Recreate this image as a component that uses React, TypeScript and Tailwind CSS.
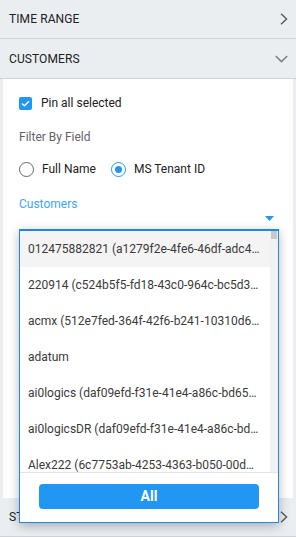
import React from 'react';

const customers = [
  '012475882821 (a1279f2e-4fe6-46df-adc4-5b2e8c1d9f07)',
  '220914 (c524b5f5-fd18-43c0-964c-bc5d3a7e1f42)',
  'acmx (512e7fed-364f-42f6-b241-10310d6c8a9e)',
  'adatum',
  'ai0logics (daf09efd-f31e-41e4-a86c-bd65e2f0c113)',
  'ai0logicsDR (daf09efd-f31e-41e4-a86c-bd65e2f0c113)',
  'Alex222 (6c7753ab-4253-4363-b050-00d3f8a2e6b1)',
];

function ChevronRight() {
  return (
    <svg width="8" height="12" viewBox="0 0 8 12" fill="none">
      <path d="M1 0.8 L6.6 6 L1 11.2" stroke="#555a60" strokeWidth="1.4" />
    </svg>
  );
}

function ChevronDown() {
  return (
    <svg width="13" height="8" viewBox="0 0 13 8" fill="none">
      <path d="M0.8 1 L6.5 6.6 L12.2 1" stroke="#7a7f85" strokeWidth="1.5" />
    </svg>
  );
}

function SectionHeader({ title, open, h }: { title: string; open?: boolean; h: string }) {
  return (
    <div className={`${h} flex items-center justify-between pl-[9px] pr-[8px] border-b border-[#cfd3d7]`}>
      <span className="text-[12px] text-[#212121] tracking-[0.1px]">{title}</span>
      {open ? <ChevronDown /> : <ChevronRight />}
    </div>
  );
}

export default function App() {
  return (
    <div className="relative w-[296px] h-[537px] overflow-hidden bg-[#ebeef1] font-['Roboto',sans-serif]">
      <SectionHeader title="TIME RANGE" h="h-[39px]" />
      <SectionHeader title="CUSTOMERS" open h="h-[40px]" />

      {/* Customers panel */}
      <div className="mx-[3px] h-[419px] bg-white pl-4 pr-[19px] flex flex-col">
        <div className="mt-[14px] h-5 flex items-center gap-[9px]">
          <span className="w-[13px] h-[13px] rounded-[2px] bg-[#2196f3] flex items-center justify-center">
            <svg width="9" height="7" viewBox="0 0 9 7" fill="none">
              <path d="M1 3.6 L3.4 5.8 L8 1.2" stroke="white" strokeWidth="1.4" />
            </svg>
          </span>
          <span className="text-[12px] text-[#212121]">Pin all selected</span>
        </div>

        <div className="mt-4 h-4 flex items-center text-[12px] text-[#5f6368]">Filter By Field</div>

        <div className="mt-[14px] h-5 flex items-center">
          <span className="w-[15px] h-[15px] rounded-full border-[1.5px] border-[#666]" />
          <span className="ml-[8px] text-[12px] text-[#212121]">Full Name</span>
          <span className="ml-[15px] w-[15px] h-[15px] rounded-full border-[1.5px] border-[#2196f3] flex items-center justify-center">
            <span className="w-[7px] h-[7px] rounded-full bg-[#2196f3]" />
          </span>
          <span className="ml-[8px] text-[12px] text-[#212121]">MS Tenant ID</span>
        </div>

        <div className="mt-[17px] h-4 flex items-center text-[12px] text-[#42a5f5]">Customers</div>

        <div className="mt-[2px] h-[8px] flex items-center justify-end">
          <svg width="9" height="5" viewBox="0 0 9 5">
            <path d="M0 0 L9 0 L4.5 5 Z" fill="#2196f3" />
          </svg>
        </div>
      </div>

      <SectionHeader title="STATUS" h="h-[39px]" />

      {/* Customer dropdown */}
      <div className="absolute left-[19px] top-[229px] w-[260px] h-[294px] bg-white border border-t-2 border-[#1e88e5] shadow-[0_3px_10px_rgba(0,0,0,0.28)] flex flex-col">
        <div className="h-[241px] flex overflow-hidden">
          <div className="flex-1 min-w-0">
            {customers.map((c, i) => (
              <div
                key={c}
                className={`h-9 flex items-center pl-2 pr-[10px] text-[12px] text-[#3a3a3a] ${i === 0 ? 'bg-[#f4f4f4]' : ''}`}
              >
                <span className="truncate">{c}</span>
              </div>
            ))}
          </div>
          <div className="w-[8px] bg-[#f1f1f1] flex flex-col items-center">
            <div className="w-[6px] h-[8px] bg-[#c8c8c8]" />
          </div>
        </div>
        <div className="flex-1 border-t border-[#e3e3e3] pt-[11px] px-[19px]">
          <button className="w-full h-[25px] rounded-[4px] bg-[#2196f3] text-white text-[14px] font-bold">
            All
          </button>
        </div>
      </div>
    </div>
  );
}
